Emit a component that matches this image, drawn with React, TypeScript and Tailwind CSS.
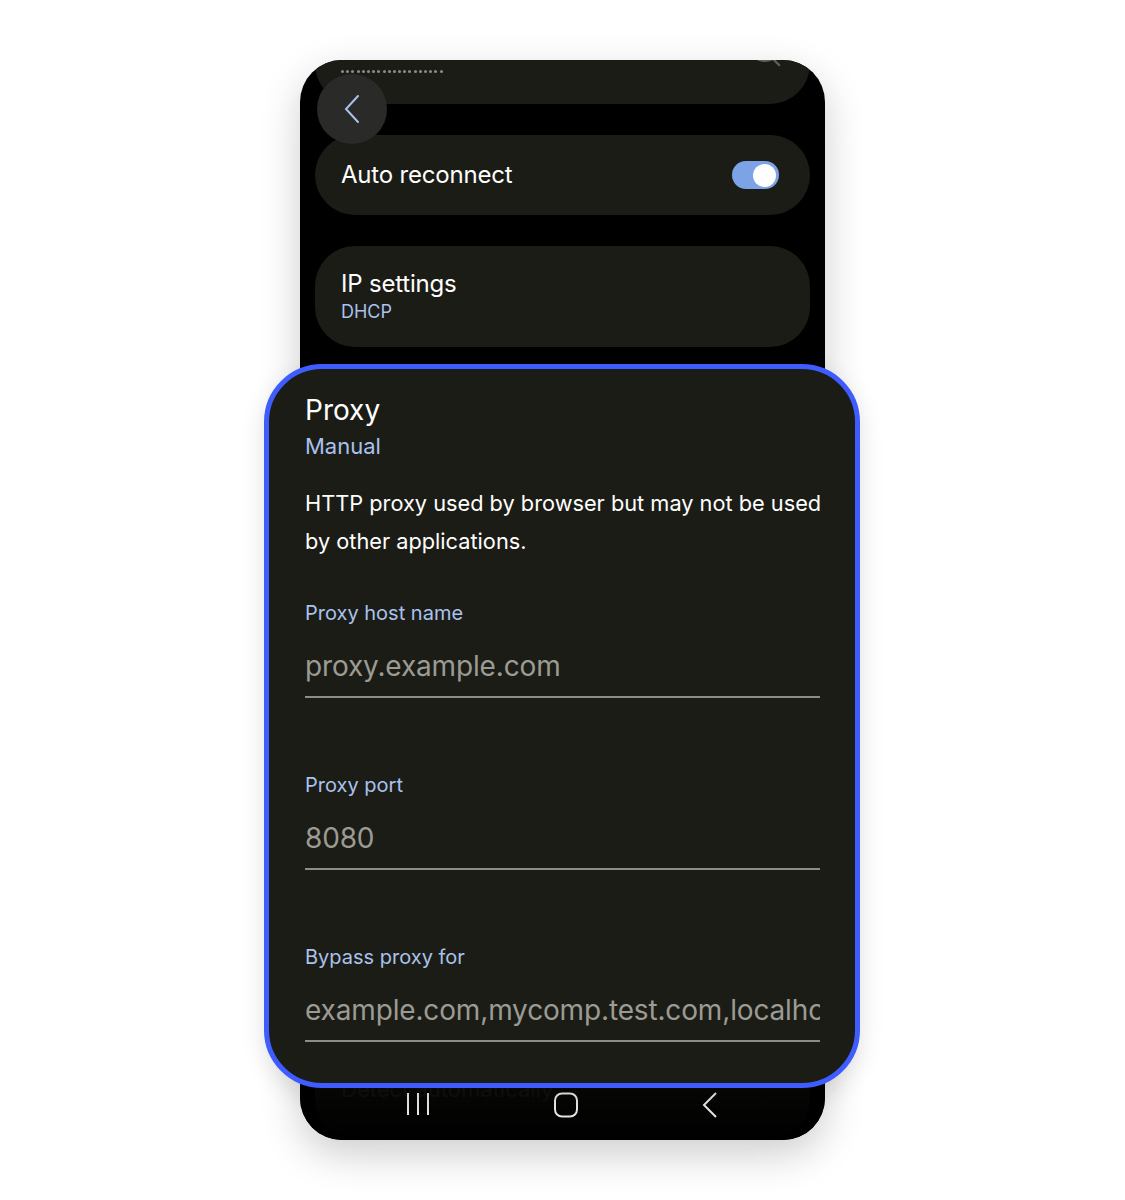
import { EyeOff } from 'lucide-react'

const font = { fontFamily: 'Inter, Roboto, "Noto Sans", sans-serif' }

function Dots() {
  return (
    <div className="flex gap-[2.2px]">
      {Array.from({ length: 20 }).map((_, i) => (
        <span key={i} className="h-[3px] w-[3px] rounded-full bg-[#8a8a86]" />
      ))}
    </div>
  )
}

function Toggle() {
  return (
    <div className="flex h-[28px] w-[47px] items-center justify-end rounded-full bg-[#7ca3e6] pr-[3px]">
      <div className="h-[23px] w-[23px] rounded-full bg-white" />
    </div>
  )
}

function Field({ label, value, first }: { label: string; value: string; first?: boolean }) {
  return (
    <div className={first ? 'mt-[39px]' : 'mt-[73px]'}>
      <div className="text-[20px] leading-[28px] text-[#a9c2ec]">{label}</div>
      <div className="mt-[21px] overflow-hidden whitespace-nowrap border-b-2 border-[#8d8d86] pb-[12px] text-[28px] leading-[36px] tracking-[-0.15px] text-[#9b9b93]">
        {value}
      </div>
    </div>
  )
}

function NavBar() {
  return (
    <div className="absolute inset-x-0 bottom-0 h-[62px] bg-gradient-to-b from-[#000000b0] to-black">
      <div className="flex h-full items-start justify-between px-[106px] pt-[14px]">
        {/* recent apps */}
        <svg width="24" height="24" viewBox="0 0 24 24" fill="none" stroke="#e6e6e2" strokeWidth="2">
          <path d="M2 1v22M12 1v22M22 1v22" />
        </svg>
        {/* home */}
        <svg width="26" height="26" viewBox="0 0 26 26" fill="none" stroke="#e6e6e2" strokeWidth="2">
          <rect x="2" y="1.5" width="22" height="23" rx="7" />
        </svg>
        {/* back */}
        <svg width="18" height="26" viewBox="0 0 18 26" fill="none" stroke="#e6e6e2" strokeWidth="2">
          <path d="M15 1L3 13l12 12" />
        </svg>
      </div>
    </div>
  )
}

export default function App() {
  return (
    <div className="flex min-h-[1200px] w-full justify-center bg-white pt-[60px]" style={font}>
      <div className="relative h-[1080px] w-[525px]">
        <div className="relative h-full w-full overflow-hidden rounded-[42px] bg-black shadow-[0_14px_40px_rgba(0,0,0,0.2)]">
          <div className="flex flex-col px-[15px]">
            {/* password row, scrolled mostly out of view */}
            <div className="relative mt-[-46px] flex h-[90px] items-start rounded-[40px] bg-[#1c1c16] px-[26px] pt-[56px]">
              <Dots />
              <EyeOff className="absolute right-[28px] top-[20px]" size={34} color="#5e5e5a" strokeWidth={1.6} />
            </div>

            <div className="mt-[31px] flex h-[80px] items-center justify-between rounded-[40px] bg-[#1c1c16] pl-[26px] pr-[31px]">
              <span className="text-[24px] tracking-[-0.2px] text-white">Auto reconnect</span>
              <Toggle />
            </div>

            <div className="mt-[31px] flex h-[101px] flex-col rounded-[40px] bg-[#1c1c16] pl-[26px] pt-[23px]">
              <span className="text-[24px] leading-[30px] tracking-[-0.2px] text-white">IP settings</span>
              <span className="mt-[1px] text-[18px] leading-[24px] text-[#a9c2ec]">DHCP</span>
            </div>

            <div className="mt-[31px] flex h-[760px] flex-col justify-end rounded-[40px] bg-[#1c1c16] pb-[34px] pl-[26px]">
              <span className="text-[22px] leading-[30px] text-[#44443f]">Detect automatically</span>
            </div>
          </div>

          {/* floating back button */}
          <div className="absolute left-[17px] top-[14px] flex h-[70px] w-[70px] items-center justify-center rounded-full bg-[#2a2a28]">
            <svg width="18" height="30" viewBox="0 0 18 30" fill="none" stroke="#a9c2ec" strokeWidth="2" strokeLinecap="round">
              <path d="M15 2L3 15l12 13" />
            </svg>
          </div>

          <NavBar />
        </div>

        {/* enlarged proxy card */}
        <div className="absolute left-[-36px] top-[304px] w-[596px] rounded-[58px] border-[5px] border-[#3e5cff] bg-[#1c1c16] pb-[41px] pl-[36px] pr-[35px] pt-[23px] shadow-[0_8px_24px_rgba(0,0,0,0.12)]">
          <div className="text-[28px] leading-[36px] text-white">Proxy</div>
          <div className="mt-[3px] text-[22px] leading-[30px] text-[#a9c2ec]">Manual</div>
          <div className="mt-[23px] whitespace-nowrap text-[21.75px] leading-[38px] text-white">
            HTTP proxy used by browser but may not be used
            <br />
            by other applications.
          </div>
          <Field first label="Proxy host name" value="proxy.example.com" />
          <Field label="Proxy port" value="8080" />
          <Field label="Bypass proxy for" value="example.com,mycomp.test.com,localhost" />
        </div>
      </div>
    </div>
  )
}
